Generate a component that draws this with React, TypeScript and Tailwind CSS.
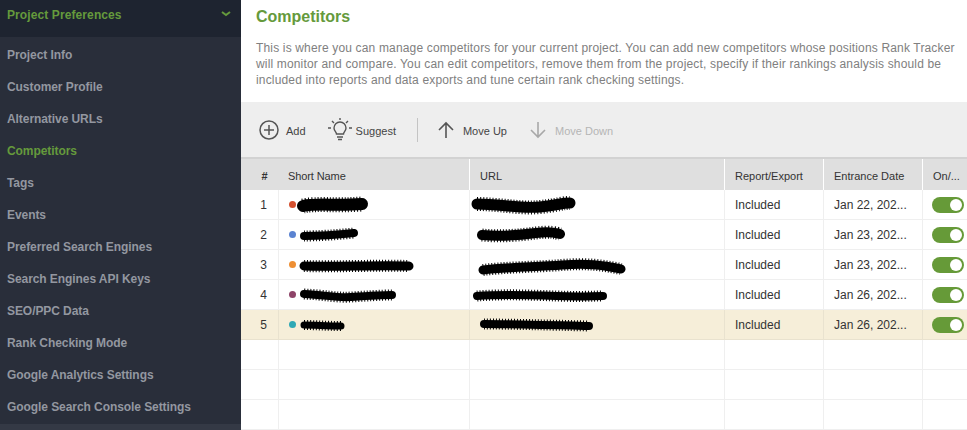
const sidebarItems = [
  'Project Info',
  'Customer Profile',
  'Alternative URLs',
  'Competitors',
  'Tags',
  'Events',
  'Preferred Search Engines',
  'Search Engines API Keys',
  'SEO/PPC Data',
  'Rank Checking Mode',
  'Google Analytics Settings',
  'Google Search Console Settings',
];

// redaction scribbles from the screenshot, drawn over the cells
const rows = [
  { n: 1, dot: 'bg-[#d4502f]', date: 'Jan 22, 202...', nameW: 73, nameT: 12, name: 'M7 9 C20 6 40 9 66 7', urlW: 107, urlT: 11, urlPad: 'pl-0', url: 'M7 7 C30 7 50 12 70 10 S90 6 100 6' },
  { n: 2, dot: 'bg-[#5b83d1]', date: 'Jan 23, 202...', nameW: 63, nameT: 8, name: 'M8 9 C20 9 40 8 58 6', urlW: 90, urlT: 10, urlPad: 'pl-[6px]', url: 'M6 8 C25 10 45 8 60 6 S80 6 84 7' },
  { n: 3, dot: 'bg-[#ee8f34]', date: 'Jan 23, 202...', nameW: 117, nameT: 9, name: 'M8 9 C40 10 80 8 113 9', urlW: 149, urlT: 9, urlPad: 'pl-[7px]', url: 'M6 13 C30 10 60 10 85 8 S125 8 144 12' },
  { n: 4, dot: 'bg-[#8e4468]', date: 'Jan 26, 202...', nameW: 100, nameT: 8, name: 'M8 7 C30 8 40 11 55 10 S85 8 96 8', urlW: 137, urlT: 8, urlPad: 'pl-px', url: 'M6 9 C30 7 60 8 85 9 S120 9 132 9' },
  { n: 5, dot: 'bg-[#2fa8b5]', date: 'Jan 26, 202...', nameW: 49, nameT: 7, name: 'M8 8 C20 8 30 9 45 9', urlW: 116, urlT: 8, urlPad: 'pl-[8px]', url: 'M6 7 C30 7 70 8 111 9' },
];

const emptyRows = [6, 7, 8];

function Scribble({ w, t, d }: { w: number; t: number; d: string }) {
  return (
    <svg width={w} height={18} viewBox={`0 0 ${w} 18`} fill="none" className="mt-[3px] shrink-0 overflow-visible">
      <path d={d} stroke="#000" strokeWidth={t} strokeLinecap="round" />
      <path d={d} stroke="#000" strokeWidth={t + 3} strokeDasharray="1 2" />
    </svg>
  );
}

function Toggle() {
  return (
    <div className="flex h-4 w-8 items-center justify-end rounded-full bg-[#669a38] pr-[2px]">
      <div className="h-3 w-3 rounded-full bg-white" />
    </div>
  );
}

export default function App() {
  return (
    <div className="flex h-[430px] w-[967px] overflow-hidden bg-white font-['Liberation_Sans',Arial,sans-serif]">
      {/* Sidebar */}
      <aside className="flex w-[241px] shrink-0 flex-col bg-[#292e3a]">
        <div className="flex h-[37px] shrink-0 items-start justify-between bg-[#1e2430] pl-[7px] pr-[10px] pt-[8px]">
          <span className="text-[12px] font-bold leading-[15px] tracking-[0.1px] text-[#659a3c]">Project Preferences</span>
          <svg width="10" height="6" viewBox="0 0 10 6" fill="none" className="mt-[3px]">
            <path d="M1 1l4 3 4-3" stroke="#659a3c" strokeWidth="2" />
          </svg>
        </div>
        <nav className="flex flex-col pt-[2px]">
          {sidebarItems.map((item) => (
            <div
              key={item}
              className={`flex h-8 items-center pl-[7px] text-[12px] font-bold tracking-[-0.07px] ${
                item === 'Competitors' ? 'text-[#659a3c]' : 'text-[#9397a0]'
              }`}
            >
              {item}
            </div>
          ))}
        </nav>
        <div className="mt-auto h-[6px] bg-[#343945]" />
      </aside>

      {/* Main */}
      <main className="flex min-w-0 flex-1 flex-col">
        <div className="h-[102px] shrink-0 pl-[15px] pt-[7px]">
          <h1 className="text-[16px] font-bold leading-[19px] text-[#659a3c]">Competitors</h1>
          <p className="mt-[14px] w-[705px] text-[12px] leading-[16px] tracking-[0.16px] text-[#808080]">
            This is where you can manage competitors for your current project. You can add new competitors whose positions Rank Tracker will monitor and compare. You can edit competitors, remove them from the project, specify if their rankings analysis should be included into reports and data exports and tune certain rank checking settings.
          </p>
        </div>

        {/* Toolbar */}
        <div className="flex h-[57px] shrink-0 items-center border-b-2 border-[#d2d2d2] bg-[#eeeeee] pl-[18px] text-[11px] leading-[14px] text-[#444444]">
          <svg width="20" height="20" viewBox="0 0 20 20" fill="none" stroke="#555" strokeWidth="1.5">
            <circle cx="10" cy="10" r="9" />
            <path d="M10 5v10M5 10h10" />
          </svg>
          <span className="ml-[7px] mt-[2px]">Add</span>
          <svg width="26" height="24" viewBox="0 0 26 24" fill="none" stroke="#555" strokeWidth="1.4" className="ml-[21px]">
            <path d="M9.5 16c0-2-2.5-3-2.5-6a6 6 0 0 1 12 0c0 3-2.5 4-2.5 6z" />
            <path d="M10 19h6M11 21.500h4M1 10h3M22 10h3M13 0v2M5 3l2 2M21 3l-2 2" />
          </svg>
          <span className="ml-[3px] mt-[2px]">Suggest</span>
          <div className="ml-[21px] h-6 w-px bg-[#c4c4c4]" />
          <svg width="18" height="18" viewBox="0 0 18 18" fill="none" stroke="#555" strokeWidth="1.6" className="ml-[19px]">
            <path d="M9 17V2M2 9l7-7 7 7" />
          </svg>
          <span className="ml-[8px] mt-[2px]">Move Up</span>
          <svg width="18" height="18" viewBox="0 0 18 18" fill="none" stroke="#a8a8a8" strokeWidth="1.6" className="ml-[22px]">
            <path d="M9 1v15M2 9l7 7 7-7" />
          </svg>
          <span className="ml-[8px] mt-[2px] text-[#b5b5b5]">Move Down</span>
        </div>

        {/* Table */}
        <div className="grid shrink-0 grid-cols-[37px_191px_255px_99px_99px_45px] text-[12px] text-[#333333]">
          <div className="flex h-[31px] items-center justify-center bg-[#dfdfdf] pl-[10px] pt-[3px] text-[11px] font-bold">#</div>
          <div className="flex h-[31px] items-center bg-[#dfdfdf] pl-[10px] pt-[3px] text-[11px] tracking-[-0.1px]">Short Name</div>
          <div className="flex h-[31px] items-center border-l border-white bg-[#dfdfdf] pl-[10px] pt-[3px] text-[11px]">URL</div>
          <div className="flex h-[31px] items-center border-l border-white bg-[#dfdfdf] pl-[10px] pt-[3px] text-[11px]">Report/Export</div>
          <div className="flex h-[31px] items-center border-l border-white bg-[#dfdfdf] pl-[10px] pt-[3px] text-[11px]">Entrance Date</div>
          <div className="flex h-[31px] items-center border-l border-white bg-[#dfdfdf] pl-[10px] pt-[3px] text-[11px]">On/...</div>

          {rows.map((row) => {
            const bg = row.n === 5 ? 'bg-[#f6eed9]' : 'bg-white';
            const line = row.n === 5 ? 'border-[#e9e2cf]' : 'border-[#efefef]';
            return (
              <div key={row.n} className="contents">
                <div className={`flex h-[30px] items-center justify-center border-b ${line} ${bg} pl-[8px]`}>{row.n}</div>
                <div className={`flex h-[30px] items-center border-b border-l ${line} ${bg} pl-[10px]`}>
                  <span className={`h-[7px] w-[7px] shrink-0 rounded-full ${row.dot}`} />
                  <Scribble w={row.nameW} t={row.nameT} d={row.name} />
                </div>
                <div className={`flex h-[30px] items-center border-b border-l ${line} ${bg} ${row.urlPad}`}>
                  <Scribble w={row.urlW} t={row.urlT} d={row.url} />
                </div>
                <div className={`flex h-[30px] items-center border-b border-l ${line} ${bg} pl-[10px]`}>Included</div>
                <div className={`flex h-[30px] items-center border-b border-l ${line} ${bg} pl-[10px]`}>{row.date}</div>
                <div className={`flex h-[30px] items-center border-b border-l ${line} ${bg} pl-[9px]`}>
                  <Toggle />
                </div>
              </div>
            );
          })}

          {emptyRows.map((n) => (
            <div key={n} className="contents">
              <div className="h-[30px] border-b border-[#efefef]" />
              <div className="h-[30px] border-b border-l border-[#efefef]" />
              <div className="h-[30px] border-b border-l border-[#efefef]" />
              <div className="h-[30px] border-b border-l border-[#efefef]" />
              <div className="h-[30px] border-b border-l border-[#efefef]" />
              <div className="h-[30px] border-b border-l border-[#efefef]" />
            </div>
          ))}
        </div>
      </main>
    </div>
  );
}
